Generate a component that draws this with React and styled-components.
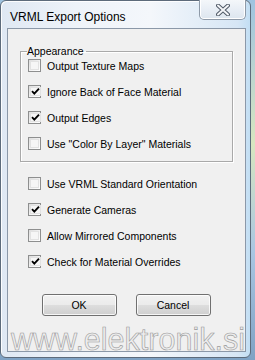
import React from "react";
import styled, { createGlobalStyle } from "styled-components";

const GlobalStyle = createGlobalStyle`
  html, body {
    margin: 0;
    padding: 0;
  }
  body {
    width: 255px;
    height: 360px;
    overflow: hidden;
    background: linear-gradient(180deg, #9fc3e0 0%, #d8e6c0 40%, #a9c6e2 70%, #7fa2c4 100%);
    font-family: "Liberation Sans", Arial, sans-serif;
  }
`;

const Window = styled.div`
  position: relative;
  box-sizing: border-box;
  width: 251px;
  height: 358px;
  border: 1px solid #5d6b7b;
  border-radius: 6px;
  background: linear-gradient(90deg, #dfe8f3 0%, #eef3f9 30%, #f4f7fb 60%, #d6e6f5 95%, #c2def3 100%);
  box-shadow: inset 1px 1px 0 rgba(255, 255, 255, 0.9);
  display: flex;
  flex-direction: column;
`;

const TitleBar = styled.div`
  height: 27px;
  display: flex;
  align-items: flex-start;
  justify-content: space-between;
  padding-left: 9px;
  padding-right: 4px;
`;

const Title = styled.span`
  margin-top: 9px;
  font-size: 12px;
  line-height: 14px;
  color: #000;
`;

const CloseButton = styled.div`
  box-sizing: border-box;
  width: 47px;
  height: 20px;
  margin-top: -1px;
  border: 1px solid #8e9aa8;
  border-top: none;
  border-radius: 0 0 5px 5px;
  background: linear-gradient(180deg, #f4f7fa 0%, #e8eef5 50%, #dde6ef 100%);
  box-shadow: inset 0 -1px 0 #ffffff, inset 1px 0 0 #ffffff, inset -1px 0 0 #ffffff;
  display: flex;
  align-items: center;
  justify-content: center;
`;

const Client = styled.div`
  position: relative;
  box-sizing: border-box;
  flex: 1;
  margin: 0 4px 5px 6px;
  border: 1px solid #8b98a8;
  background: #f0f0f0;
  padding: 16px 12px 0 12px;
  display: flex;
  flex-direction: column;
`;

const GroupBox = styled.fieldset`
  margin: 0;
  padding: 2px 0 11px 7px;
  border: 1px solid #a9a9a9;
  box-shadow: inset 1px 1px 0 #ffffff, 1px 1px 0 #ffffff;
  display: flex;
  flex-direction: column;
  gap: 13px;
`;

const Legend = styled.legend`
  margin-left: -1px;
  padding: 0 2px 0 0;
  font-size: 10.5px;
  line-height: 12px;
  color: #000;
`;

const List = styled.div`
  margin-top: 15px;
  padding-left: 8px;
  display: flex;
  flex-direction: column;
  gap: 13px;
`;

const Row = styled.label`
  height: 13px;
  display: flex;
  align-items: center;
  gap: 6px;
  font-size: 10.5px;
  color: #000;
  white-space: nowrap;
`;

const Box = styled.span`
  box-sizing: border-box;
  width: 13px;
  height: 13px;
  flex: none;
  border: 1px solid #8e8f8f;
  background: linear-gradient(135deg, #dcdcdc 0%, #f2f2f2 50%, #ffffff 100%);
  padding: 1px;
  display: flex;

  span {
    flex: 1;
    background: #f6f6f6;
    border: 1px solid #e2e2e2;
    display: flex;
    align-items: center;
    justify-content: center;
  }
`;

const Buttons = styled.div`
  margin-top: 26px;
  display: flex;
  justify-content: center;
  gap: 19px;
  padding-right: 1px;
`;

const Button = styled.div`
  box-sizing: border-box;
  width: 75px;
  height: 22px;
  border: 1px solid #707070;
  border-radius: 3px;
  background: linear-gradient(180deg, #f2f2f2 0%, #ebebeb 48%, #dddddd 52%, #cfcfcf 100%);
  box-shadow: inset 0 0 0 1px rgba(255, 255, 255, 0.8);
  display: flex;
  align-items: center;
  justify-content: center;
  font-size: 10.5px;
  color: #000;
`;

const Watermark = styled.div`
  position: absolute;
  left: 10px;
  bottom: 3px;
  font-family: "Liberation Sans", Arial, sans-serif;
  font-size: 30.5px;
  line-height: 30px;
  color: #ededed;
  -webkit-text-stroke: 0.6px #9a9a9a;
  pointer-events: none;
`;

function Check() {
  return (
    <svg width="9" height="9" viewBox="0 0 9 9">
      <path d="M1 4.2 L3.3 6.6 L8 1.6" fill="none" stroke="#000" strokeWidth="1.9" />
    </svg>
  );
}

function CheckBox({ checked, children }) {
  return (
    <Row>
      <Box>
        <span>{checked && <Check />}</span>
      </Box>
      {children}
    </Row>
  );
}

function CloseIcon() {
  return (
    <svg width="14" height="12" viewBox="0 0 14 12">
      <path d="M2 1.5 L12 10.5 M12 1.5 L2 10.5" stroke="#4f5966" strokeWidth="4" strokeLinecap="round" />
      <path d="M2 1.5 L12 10.5 M12 1.5 L2 10.5" stroke="#f3f5f8" strokeWidth="2" strokeLinecap="round" />
    </svg>
  );
}

export default function App() {
  return (
    <>
      <GlobalStyle />
      <Window>
        <TitleBar>
          <Title>VRML Export Options</Title>
          <CloseButton>
            <CloseIcon />
          </CloseButton>
        </TitleBar>
        <Client>
          <GroupBox>
            <Legend>Appearance</Legend>
            <CheckBox>Output Texture Maps</CheckBox>
            <CheckBox checked>Ignore Back of Face Material</CheckBox>
            <CheckBox checked>Output Edges</CheckBox>
            <CheckBox>Use "Color By Layer" Materials</CheckBox>
          </GroupBox>
          <List>
            <CheckBox>Use VRML Standard Orientation</CheckBox>
            <CheckBox checked>Generate Cameras</CheckBox>
            <CheckBox>Allow Mirrored Components</CheckBox>
            <CheckBox checked>Check for Material Overrides</CheckBox>
          </List>
          <Buttons>
            <Button>OK</Button>
            <Button>Cancel</Button>
          </Buttons>
        </Client>
        <Watermark>www.elektronik.si</Watermark>
      </Window>
    </>
  );
}
